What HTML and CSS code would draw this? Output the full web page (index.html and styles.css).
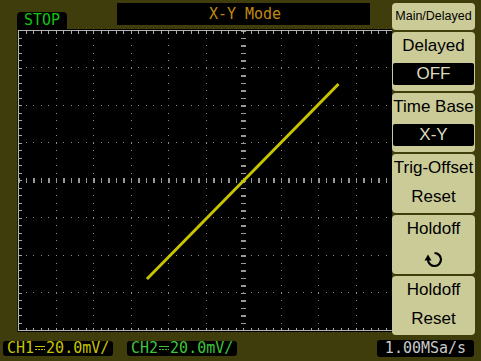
FILE: index.html
```html
<!DOCTYPE html>
<html lang="en">
<head>
    <meta charset="UTF-8">
    <meta name="viewport" content="width=device-width, initial-scale=1.0">
    <title>X-Y Mode</title>
    <link rel="stylesheet" href="styles.css">
</head>
<body>
    <div class="main">
        <div class="left">
            <div class="topbar">
                <div class="run-state">STOP</div>
                <div class="title">X-Y Mode</div>
            </div>

            <!-- graticule: 12 x 8 divisions, 37.5px each, right part hidden by the menu -->
            <svg class="screen" viewBox="17 29 375 303" width="375" height="303" shape-rendering="crispEdges">
                <rect x="17" y="29" width="375" height="303" fill="#000"/>
                <g stroke="#8c8c8c" stroke-width="1" stroke-dasharray="1 6.5">
                    <line x1="56.5" y1="30" x2="56.5" y2="331"/>
                    <line x1="93.5" y1="30" x2="93.5" y2="331"/>
                    <line x1="131.5" y1="30" x2="131.5" y2="331"/>
                    <line x1="168.5" y1="30" x2="168.5" y2="331"/>
                    <line x1="206.5" y1="30" x2="206.5" y2="331"/>
                    <line x1="281.5" y1="30" x2="281.5" y2="331"/>
                    <line x1="318.5" y1="30" x2="318.5" y2="331"/>
                    <line x1="356.5" y1="30" x2="356.5" y2="331"/>
                    <line x1="18" y1="67.5" x2="392" y2="67.5"/>
                    <line x1="18" y1="105.5" x2="392" y2="105.5"/>
                    <line x1="18" y1="142.5" x2="392" y2="142.5"/>
                    <line x1="18" y1="217.5" x2="392" y2="217.5"/>
                    <line x1="18" y1="255.5" x2="392" y2="255.5"/>
                    <line x1="18" y1="292.5" x2="392" y2="292.5"/>
                </g>
                <!-- centre axes with small ticks -->
                <g stroke="#9a9a9a" stroke-dasharray="1.5 6">
                    <line x1="243.5" y1="30" x2="243.5" y2="331" stroke-width="5"/>
                    <line x1="18" y1="180.5" x2="392" y2="180.5" stroke-width="5"/>
                </g>
                <!-- border ticks -->
                <g stroke="#a8a8a8" stroke-dasharray="1 6.5">
                    <line x1="18" y1="32" x2="392" y2="32" stroke-width="3"/>
                    <line x1="18" y1="329" x2="392" y2="329" stroke-width="3"/>
                    <line x1="20" y1="30" x2="20" y2="331" stroke-width="3"/>
                </g>
                <g stroke="#b4b4b4" stroke-width="1">
                    <line x1="18.5" y1="30" x2="18.5" y2="331"/>
                    <line x1="18" y1="30.5" x2="392" y2="30.5"/>
                    <line x1="18" y1="330.5" x2="392" y2="330.5"/>
                </g>
                <line x1="17" y1="29" x2="17" y2="332" stroke="#1e1d06" stroke-width="2"/>
                <line x1="148" y1="278" x2="337.5" y2="85" stroke="#c9c400" stroke-width="3" stroke-linecap="square" shape-rendering="auto"/>
            </svg>
        </div>

        <div class="menu">
            <div class="btn btn-head">Main/Delayed</div>
            <div class="btn">
                <div class="label">Delayed</div>
                <div class="value">OFF</div>
            </div>
            <div class="btn">
                <div class="label">Time Base</div>
                <div class="value">X-Y</div>
            </div>
            <div class="btn">
                <div class="label">Trig-Offset</div>
                <div class="label">Reset</div>
            </div>
            <div class="btn">
                <div class="label">Holdoff</div>
                <div class="label">
                    <svg class="knob" width="20" height="18" viewBox="0 0 20 18">
                        <path d="M10.5 3 A6.5 6.5 0 1 1 4 10" fill="none" stroke="#000" stroke-width="2.2"/>
                        <path d="M0.5 10.5 L7.5 10.5 L4 4.5 Z" fill="#000"/>
                    </svg>
                </div>
            </div>
            <div class="btn">
                <div class="label">Holdoff</div>
                <div class="label">Reset</div>
            </div>
        </div>
    </div>

    <div class="statusbar">
        <div class="chan ch1">CH1<svg class="dc" width="10" height="8" viewBox="0 0 10 8"><path d="M0 2.5 H10" stroke="currentColor"/><path d="M0 5.5 H10" stroke="currentColor" stroke-dasharray="2 1"/></svg>20.0mV/</div>
        <div class="chan ch2">CH2<svg class="dc" width="10" height="8" viewBox="0 0 10 8"><path d="M0 2.5 H10" stroke="currentColor"/><path d="M0 5.5 H10" stroke="currentColor" stroke-dasharray="2 1"/></svg>20.0mV/</div>
        <div class="rate">1.00MSa/s</div>
    </div>
</body>
</html>
```

FILE: styles.css
```css
body {
    margin: 0;
    width: 481px;
    height: 361px;
    overflow: hidden;
    background-color: #403d0c;
    font-family: "Liberation Sans", Arial, sans-serif;
}

.main {
    display: flex;
    height: 338px;
}

.left {
    width: 392px;
}

.topbar {
    display: flex;
    align-items: flex-start;
    height: 29px;
}

.run-state {
    margin: 12px 0 0 17px;
    width: 50px;
    height: 17px;
    background-color: #000;
    border-radius: 4px 4px 0 0;
    color: #12c412;
    font: 15px/17px "DejaVu Sans Mono", monospace;
    text-align: center;
}

.title {
    margin: 3px 0 0 50px;
    width: 253px;
    height: 22px;
    background-color: #000;
    color: #c08a12;
    font: 15px/22px "DejaVu Sans Mono", monospace;
    text-align: center;
    text-indent: 3px;
}

.screen {
    display: block;
    margin-left: 17px;
}

/* soft keys */
.menu {
    width: 83px;
    padding-top: 3px;
    display: flex;
    flex-direction: column;
    gap: 2px;
}

.btn {
    height: 59px;
    display: flex;
    flex-direction: column;
    background-color: #cbcb97;
    border-radius: 4px;
    color: #000;
    font-size: 17px;
    text-align: center;
    white-space: nowrap;
}

.btn-head {
    height: 27px;
    font-size: 12.5px;
    line-height: 27px;
}

.label {
    height: 29px;
    line-height: 28px;
}

.knob {
    vertical-align: middle;
}

.value {
    margin: 2px 1px 0;
    height: 22px;
    line-height: 22px;
    background-color: #000;
    color: #dcdcc0;
    border-radius: 2px;
}

/* bottom status line */
.statusbar {
    display: flex;
    align-items: flex-start;
    padding-top: 3px;
}

.chan,
.rate {
    height: 15px;
    background-color: #000;
    border-radius: 3px;
    font: 15px/15px "DejaVu Sans Mono", monospace;
    white-space: nowrap;
}

.chan {
    width: 106px;
    padding-left: 4px;
}

.ch1 {
    margin-left: 3px;
    color: #c8c400;
}

.ch2 {
    margin-left: 14px;
    color: #3cc43c;
}

.dc {
    vertical-align: 1px;
    margin: 0 1px;
}

.rate {
    margin: -1px 7px 0 auto;
    width: 97px;
    height: 17px;
    line-height: 17px;
    color: #c8c8c8;
    text-align: center;
}
```
